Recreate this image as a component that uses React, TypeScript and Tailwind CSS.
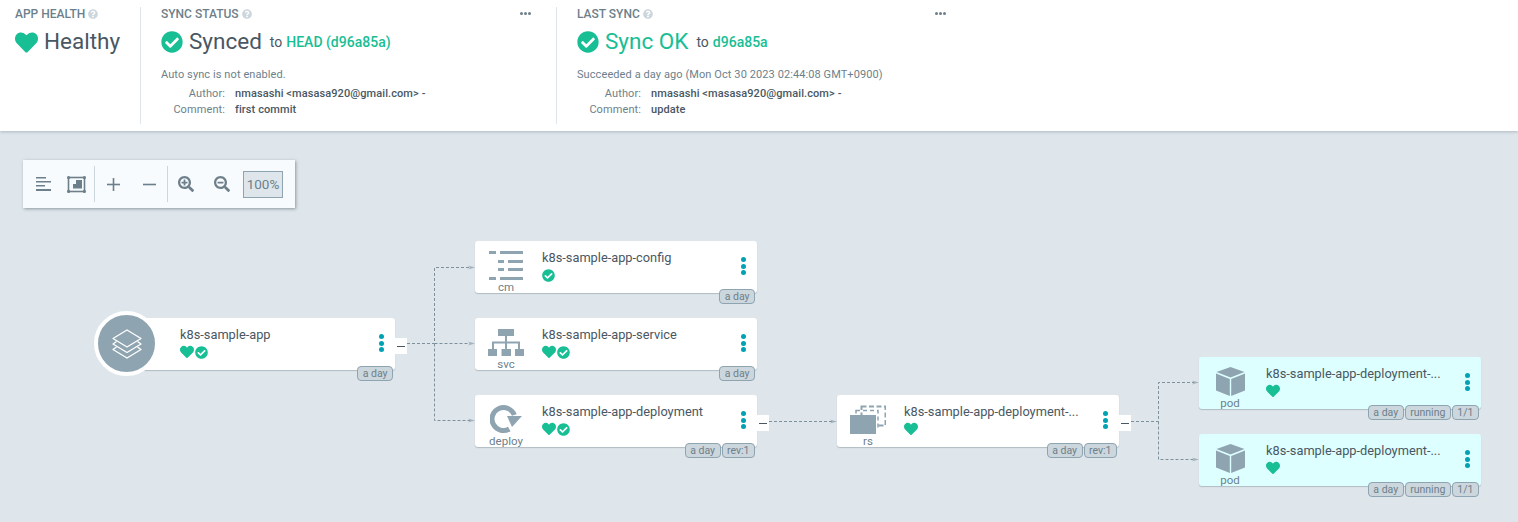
import type { ReactNode } from "react";
import { FaCheckCircle, FaHeart, FaQuestionCircle, FaSearchMinus, FaSearchPlus } from "react-icons/fa";

function Help() {
  return <FaQuestionCircle className="ml-[3px] text-[10px] text-[#ccd6dd]" />;
}

function Dots() {
  return (
    <div className="flex h-[5px] gap-[1px]">
      <span className="h-[3px] w-[3px] rounded-full bg-[#6d7f8b]" />
      <span className="h-[3px] w-[3px] rounded-full bg-[#6d7f8b]" />
      <span className="h-[3px] w-[3px] rounded-full bg-[#6d7f8b]" />
    </div>
  );
}

function Meta({ author, comment }: { author: string; comment: string }) {
  return (
    <div className="mt-[4px] grid grid-cols-[64px_1fr] gap-x-[10px] text-[11px] leading-[16px] tracking-[0.09px]">
      <span className="text-right text-[#6d7f8b]">Author:</span>
      <span className="font-medium text-[#495763]">{author}</span>
      <span className="text-right text-[#6d7f8b]">Comment:</span>
      <span className="font-medium text-[#495763]">{comment}</span>
    </div>
  );
}

function StatusTitle({ label }: { label: string }) {
  return (
    <div className="flex items-center justify-between">
      <div className="flex items-center text-[12px] font-medium leading-[14px] text-[#6d7f8b]">
        {label}
        <Help />
      </div>
      <Dots />
    </div>
  );
}

function Header() {
  return (
    <header className="flex h-[131px] bg-white pt-[7px] shadow-[0_1px_3px_rgba(73,87,99,0.3)]">
      <section className="h-[117px] w-[141px] border-r border-[#dee6eb] pl-[15px]">
        <div className="flex items-center text-[12px] font-medium leading-[14px] text-[#6d7f8b]">
          APP HEALTH
          <Help />
        </div>
        <div className="mt-[8px] flex h-[26px] items-center gap-[6px] text-[22.5px] text-[#495763]">
          <FaHeart className="text-[23px] text-[#18be94]" />
          Healthy
        </div>
      </section>
      <section className="h-[117px] w-[416px] border-r border-[#dee6eb] pl-[20px] pr-[25px]">
        <StatusTitle label="SYNC STATUS" />
        <div className="mt-[8px] flex h-[26px] items-center text-[#495763]">
          <FaCheckCircle className="text-[22px] text-[#18be94]" />
          <span className="ml-[6px] text-[22.5px]">Synced</span>
          <span className="ml-[8px] text-[14px]">to</span>
          <span className="ml-[4px] text-[14px] font-medium text-[#18be94]">HEAD (d96a85a)</span>
        </div>
        <div className="mt-[13px] text-[11px] leading-[14px] tracking-[0.09px] text-[#6d7f8b]">Auto sync is not enabled.</div>
        <Meta author="nmasashi <masasa920@gmail.com> -" comment="first commit" />
      </section>
      <section className="h-[117px] w-[414px] pl-[20px] pr-[25px]">
        <StatusTitle label="LAST SYNC" />
        <div className="mt-[8px] flex h-[26px] items-center text-[#495763]">
          <FaCheckCircle className="text-[22px] text-[#18be94]" />
          <span className="ml-[6px] text-[22.5px] text-[#18be94]">Sync OK</span>
          <span className="ml-[8px] text-[14px]">to</span>
          <span className="ml-[4px] text-[14px] font-medium text-[#18be94]">d96a85a</span>
        </div>
        <div className="mt-[13px] text-[11px] leading-[14px] tracking-[0.09px] text-[#6d7f8b]">Succeeded a day ago (Mon Oct 30 2023 02:44:08 GMT+0900)</div>
        <Meta author="nmasashi <masasa920@gmail.com> -" comment="update" />
      </section>
    </header>
  );
}

function ToolButton({ w, children }: { w: string; children: ReactNode }) {
  return <div className={`flex h-full items-center justify-center text-[#6d7f8b] ${w}`}>{children}</div>;
}

function Toolbar() {
  return (
    <div className="ml-[23px] flex h-[48px] w-[272px] items-center bg-[#f8fbfd] pl-[3px] shadow-[1px_1px_3px_rgba(73,87,99,0.55)]">
      <ToolButton w="w-[34px]">
        <svg width="15" height="15" viewBox="0 0 15 15" fill="#6d7f8b">
          <rect x="0" y="0" width="10" height="1.5" />
          <rect x="0" y="4" width="15" height="1.5" />
          <rect x="0" y="8" width="9" height="1.5" />
          <rect x="0" y="12" width="15" height="2" />
        </svg>
      </ToolButton>
      <ToolButton w="w-[34px] pr-[1px]">
        <svg width="19" height="17" viewBox="0 0 19 17" fill="#6d7f8b">
          <rect x="1.5" y="1.5" width="16" height="14" fill="none" stroke="#6d7f8b" strokeWidth="1.6" />
          <circle cx="1.6" cy="1.6" r="1.6" />
          <circle cx="17.4" cy="1.6" r="1.6" />
          <circle cx="1.6" cy="15.4" r="1.6" />
          <circle cx="17.4" cy="15.4" r="1.6" />
          <path d="M9 4h6v8.5H6V8h3z" />
        </svg>
      </ToolButton>
      <div className="h-[36px] w-px bg-[#ccd6dd]" />
      <ToolButton w="w-[36px]">
        <svg width="13" height="13" viewBox="0 0 13 13" fill="#6d7f8b">
          <rect x="0" y="5.7" width="13" height="1.6" />
          <rect x="5.7" y="0" width="1.6" height="13" />
        </svg>
      </ToolButton>
      <ToolButton w="w-[36px]">
        <svg width="13" height="13" viewBox="0 0 13 13" fill="#6d7f8b">
          <rect x="0" y="5.7" width="13" height="1.6" />
        </svg>
      </ToolButton>
      <div className="h-[36px] w-px bg-[#ccd6dd]" />
      <ToolButton w="w-[36px]">
        <FaSearchPlus className="text-[16px]" />
      </ToolButton>
      <ToolButton w="w-[36px]">
        <FaSearchMinus className="text-[16px]" />
      </ToolButton>
      <div className="ml-[3px] flex h-[27px] w-[40px] items-center justify-center border border-[#8fa4b1] bg-[#dee6eb] text-[13.5px] text-[#6d7f8b]">
        100%
      </div>
    </div>
  );
}

function Edges() {
  return (
    <svg className="absolute inset-0" width="1518" height="391" viewBox="0 0 1518 391" fill="none">
      <g stroke="#7d909c" strokeWidth="1" strokeDasharray="3 2">
        <path d="M407 212.5H434.5V136.5H472" />
        <path d="M434.5 212.5V289.5H472" />
        <path d="M434.5 212.5H472" />
        <path d="M769 290.5H834" />
        <path d="M1131 290.5H1158.5V251.5H1196" />
        <path d="M1158.5 290.5V328.5H1196" />
      </g>
      <g fill="#a3b3bd">
        <path d="M468 134.5L475 136.5L468 138.5L470 136.5Z" />
        <path d="M468 210.5L475 212.5L468 214.5L470 212.5Z" />
        <path d="M468 287.5L475 289.5L468 291.5L470 289.5Z" />
        <path d="M830 288.5L837 290.5L830 292.5L832 290.5Z" />
        <path d="M1192 249.5L1199 251.5L1192 253.5L1194 251.5Z" />
        <path d="M1192 326.5L1199 328.5L1192 330.5L1194 328.5Z" />
      </g>
    </svg>
  );
}

function ConfigIcon() {
  return (
    <svg width="34" height="29" viewBox="0 0 34 29" fill="#8fa4b1">
      <rect x="0" y="0" width="7" height="3" />
      <rect x="11" y="0" width="23" height="3" />
      <rect x="9" y="9" width="6" height="3" />
      <rect x="19" y="9" width="15" height="3" />
      <rect x="9" y="17" width="6" height="3" />
      <rect x="19" y="17" width="15" height="3" />
      <rect x="0" y="26" width="7" height="3" />
      <rect x="11" y="26" width="23" height="3" />
    </svg>
  );
}

function ServiceIcon() {
  return (
    <svg width="36" height="27" viewBox="0 0 36 27" fill="#8fa4b1">
      <rect x="10" y="0" width="16" height="7" />
      <rect x="17" y="7" width="2" height="6" />
      <path d="M4 20v-7.5h28V20h-2v-5.5H19V20h-2v-5.5H6V20z" />
      <rect x="0" y="20" width="9" height="7" />
      <rect x="13.5" y="20" width="9.5" height="7" />
      <rect x="27" y="20" width="9" height="7" />
    </svg>
  );
}

function DeployIcon() {
  return (
    <svg width="33" height="31" viewBox="0 0 33 31" fill="none">
      <path d="M19.25 25A11.5 11.5 0 1 1 24.3 11" stroke="#8fa4b1" strokeWidth="5" />
      <path d="M17 12H32L22 23Z" fill="#8fa4b1" />
    </svg>
  );
}

function ReplicaIcon() {
  return (
    <svg width="36" height="29" viewBox="0 0 36 29" fill="none">
      <rect x="11.5" y="1.5" width="24" height="19" stroke="#8fa4b1" strokeWidth="2" strokeDasharray="5 2.5" />
      <rect x="6" y="5.5" width="22" height="18" stroke="#8fa4b1" strokeWidth="1.5" strokeDasharray="4 3" />
      <rect x="0" y="10" width="26" height="19" fill="#8fa4b1" />
    </svg>
  );
}

function PodIcon() {
  return (
    <svg width="29" height="29" viewBox="0 0 29 29" fill="#8fa4b1">
      <path d="M14.5 0L28.5 5L14.5 10.5L0.5 5Z" />
      <path d="M0 6.5L13.8 12V29L0 23.5Z" />
      <path d="M29 6.5L15.2 12V29L29 23.5Z" />
    </svg>
  );
}

function AppIcon() {
  return (
    <svg width="30" height="30" viewBox="0 0 30 30" fill="none" stroke="#fff" strokeWidth="1.3" strokeLinejoin="round">
      <path d="M15 1L29 9.5L15 18L1 9.5Z" />
      <path d="M4.5 12.5L1 15L15 23.5L29 15L25.5 12.5" />
      <path d="M4.5 18L1 20.5L15 29L29 20.5L25.5 18" />
    </svg>
  );
}

function Status({ health, sync }: { health?: boolean; sync?: boolean }) {
  return (
    <div className="mt-[1px] flex h-[16px] items-center gap-[1px]">
      {health && <FaHeart className="text-[14px] text-[#18be94]" />}
      {sync && <FaCheckCircle className="text-[13px] text-[#18be94]" />}
    </div>
  );
}

function Kebab() {
  return (
    <div className="mr-[11px] flex flex-col justify-center gap-[1.5px] pb-[2px]">
      <span className="h-[5px] w-[5px] rounded-full bg-[#00a2b3]" />
      <span className="h-[5px] w-[5px] rounded-full bg-[#00a2b3]" />
      <span className="h-[5px] w-[5px] rounded-full bg-[#00a2b3]" />
    </div>
  );
}

function Collapse() {
  return (
    <div className="absolute right-[-12px] top-[20px] flex h-[16px] w-[12px] items-center justify-center bg-white">
      <span className="h-px w-[8px] bg-[#495763]" />
    </div>
  );
}

function Tags({ tags }: { tags: string[] }) {
  return (
    <div className="absolute bottom-[-11px] right-[2px] flex gap-[1px]">
      {tags.map((t) => (
        <span key={t} className="rounded-[4px] border border-[#8fa4b1] bg-[#ccd6dd] px-[4.5px] text-[10.5px] leading-[13px] text-[#6d7f8b]">
          {t}
        </span>
      ))}
    </div>
  );
}

type NodeProps = {
  pos: string;
  name: string;
  kind: string;
  icon: ReactNode;
  health?: boolean;
  sync?: boolean;
  tags: string[];
  collapse?: boolean;
  pod?: boolean;
};

function Node({ pos, name, kind, icon, health, sync, tags, collapse, pod }: NodeProps) {
  return (
    <div className={`absolute flex h-[52px] w-[282px] rounded-[3px] shadow-[0_1px_1px_rgba(73,87,99,0.3)] ${pos} ${pod ? "bg-[#deffff]" : "bg-white"}`}>
      <div className="flex w-[62px] shrink-0 flex-col items-center pt-[10px]">
        <div className="flex h-[29px] items-center justify-center">{icon}</div>
        <span className="mt-[1px] text-[11.5px] leading-[12px] text-[#6d7f8b]">{kind}</span>
      </div>
      <div className="ml-[5px] min-w-0 flex-1 pt-[8px]">
        <div className="whitespace-nowrap text-[12.8px] leading-[17px] text-[#495763]">{name}</div>
        <Status health={health} sync={sync} />
      </div>
      <Kebab />
      {collapse && <Collapse />}
      <Tags tags={tags} />
    </div>
  );
}

function Graph() {
  return (
    <>
      <Edges />
      <div className="absolute left-[94px] top-[180px] z-10 flex h-[65px] w-[65px] items-center justify-center rounded-full border-4 border-white bg-[#8fa4b1]">
        <AppIcon />
      </div>
      <div className="absolute left-[113px] top-[187px] flex h-[52px] w-[282px] rounded-[3px] bg-white pl-[67px] pt-[8px] shadow-[0_1px_1px_rgba(73,87,99,0.3)]">
        <div className="min-w-0 flex-1">
          <div className="text-[12.8px] leading-[17px] text-[#495763]">k8s-sample-app</div>
          <Status health sync />
        </div>
        <div className="mt-[-8px] flex">
          <Kebab />
        </div>
        <Collapse />
        <Tags tags={["a day"]} />
      </div>
      <Node pos="left-[475px] top-[110px]" name="k8s-sample-app-config" kind="cm" icon={<ConfigIcon />} sync tags={["a day"]} />
      <Node pos="left-[475px] top-[187px]" name="k8s-sample-app-service" kind="svc" icon={<ServiceIcon />} health sync tags={["a day"]} />
      <Node pos="left-[475px] top-[264px]" name="k8s-sample-app-deployment" kind="deploy" icon={<DeployIcon />} health sync tags={["a day", "rev:1"]} collapse />
      <Node pos="left-[837px] top-[264px]" name="k8s-sample-app-deployment-..." kind="rs" icon={<ReplicaIcon />} health tags={["a day", "rev:1"]} collapse />
      <Node pos="left-[1199px] top-[226px]" name="k8s-sample-app-deployment-..." kind="pod" icon={<PodIcon />} health tags={["a day", "running", "1/1"]} pod />
      <Node pos="left-[1199px] top-[303px]" name="k8s-sample-app-deployment-..." kind="pod" icon={<PodIcon />} health tags={["a day", "running", "1/1"]} pod />
    </>
  );
}

export default function App() {
  return (
    <div className="h-[522px] w-[1518px] overflow-hidden bg-[#dee6eb] font-['Roboto',sans-serif]">
      <Header />
      <main className="relative h-[391px] pt-[29px]">
        <Toolbar />
        <Graph />
      </main>
    </div>
  );
}
